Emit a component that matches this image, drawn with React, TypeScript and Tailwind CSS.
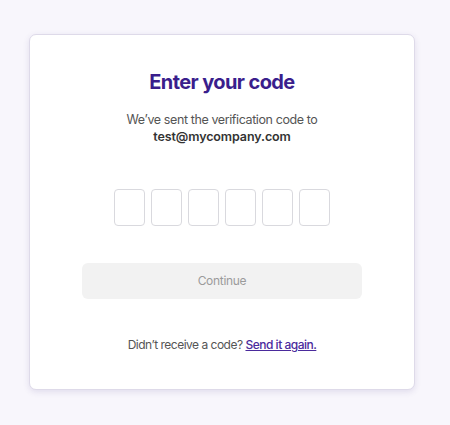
export default function App() {
  const slots = [0, 1, 2, 3, 4, 5];

  return (
    <div
      className="min-h-screen w-[450px] h-[425px] bg-[#f8f6fc] pt-[34px] pl-[29px]"
      style={{ fontFamily: 'Inter, "Noto Sans", sans-serif' }}
    >
      <div className="w-[386px] h-[356px] bg-white rounded-[7px] border border-[#dedae9] shadow-[0_2px_6px_rgba(60,40,120,0.12)] flex flex-col items-center pt-[33px]">
        <h1 className="text-[20px] leading-[28px] font-bold text-[#3a1e8c] tracking-[-0.6px]">
          Enter your code
        </h1>

        <p className="mt-[15px] text-[12.5px] leading-[17px] text-[#555] text-center tracking-[-0.4px]">
          We’ve sent the verification code to
          <br />
          <span className="font-semibold text-[#333] tracking-[-0.1px]">
            test@mycompany.com
          </span>
        </p>

        <div className="mt-[44px] flex gap-[6px]">
          {slots.map((i) => (
            <input
              key={i}
              type="text"
              maxLength={1}
              aria-label={`Digit ${i + 1}`}
              className="w-[31px] h-[37px] rounded-[4px] border border-[#d9d9de] bg-white text-center outline-none"
            />
          ))}
        </div>

        <button
          disabled
          className="mt-[37px] w-[280px] h-[36px] rounded-[6px] bg-[#f2f2f2] text-[12px] text-[#9b9b9b] tracking-[-0.3px]"
        >
          Continue
        </button>

        <p className="mt-[37px] text-[12px] leading-[17px] text-[#555] tracking-[-0.5px]">
          Didn’t receive a code?{' '}
          <a href="#" className="text-[#4a2a9c] underline font-medium">
            Send it again.
          </a>
        </p>
      </div>
    </div>
  );
}
